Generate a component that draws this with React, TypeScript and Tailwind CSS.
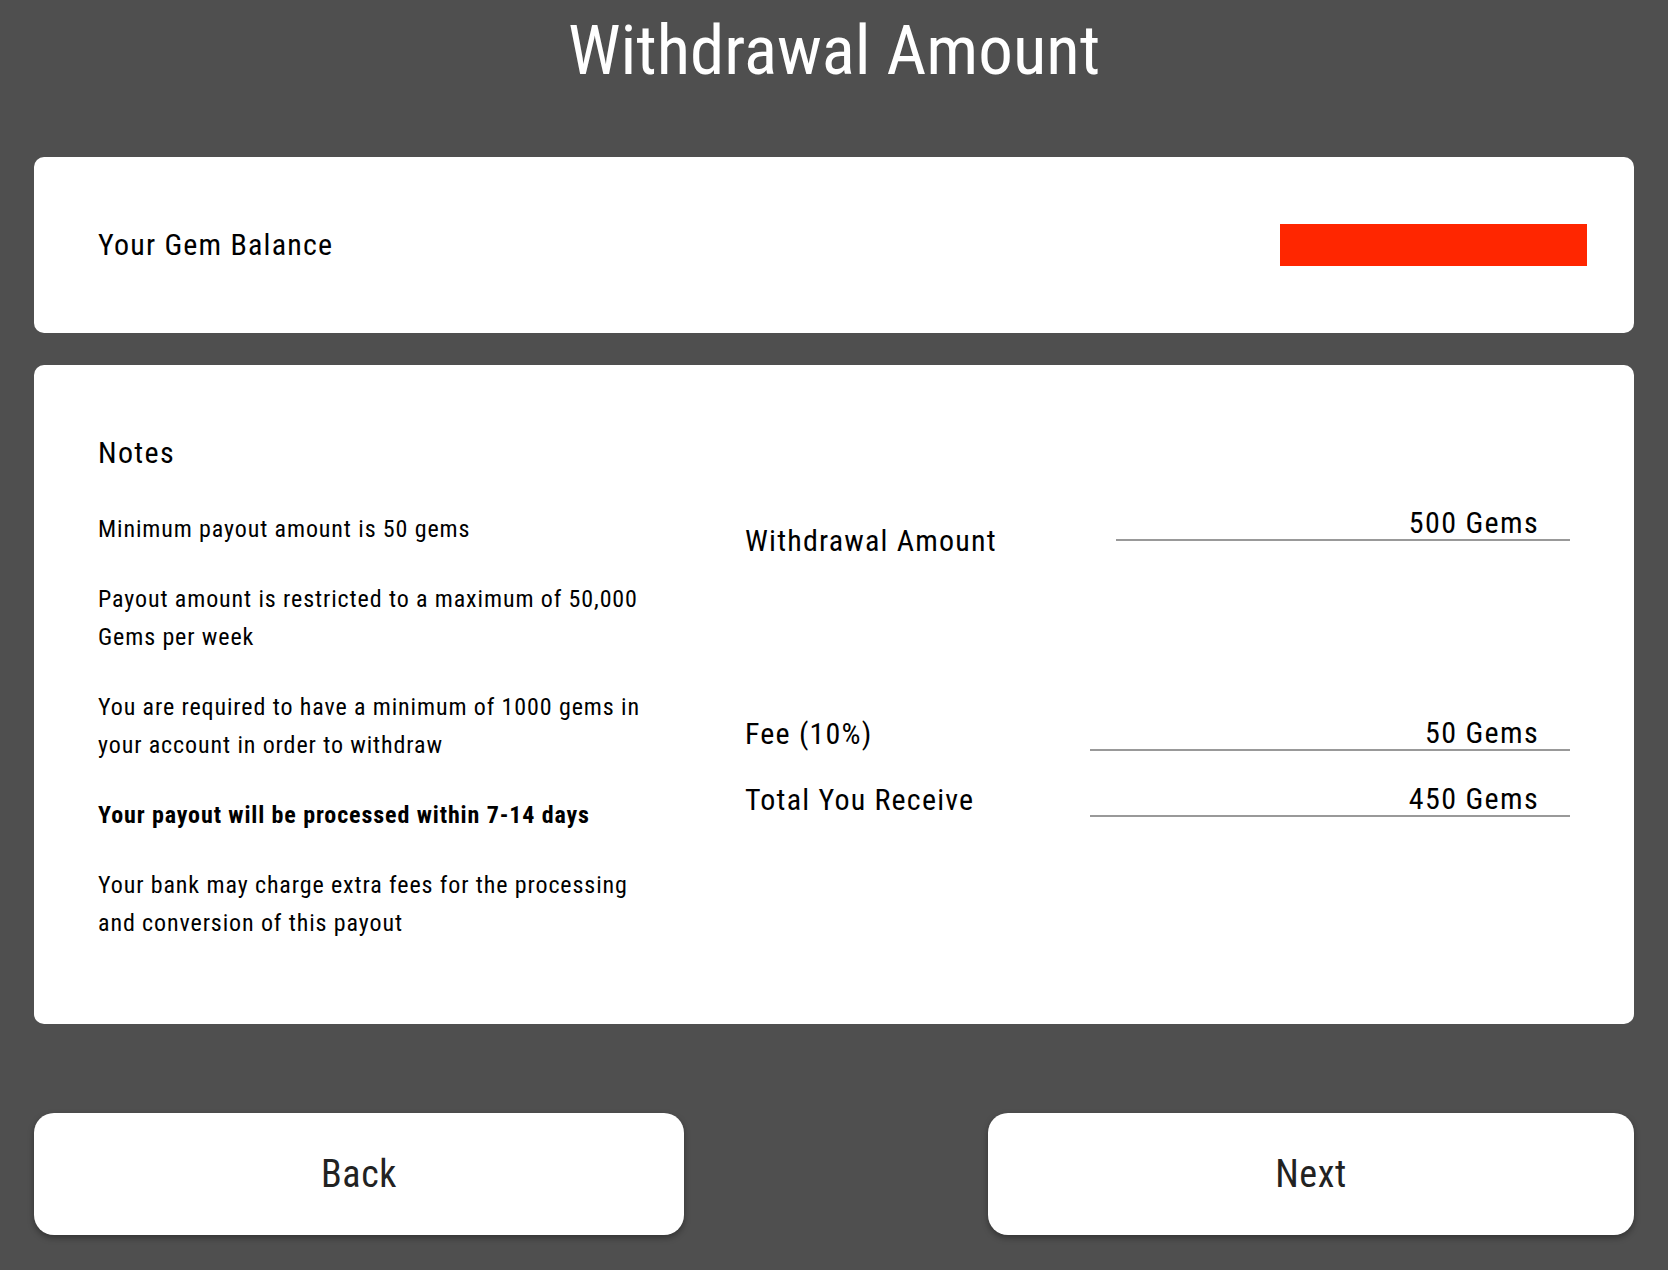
export default function App() {
  const notes = [
    { text: "Minimum payout amount is 50 gems" },
    { text: "Payout amount is restricted to a maximum of 50,000 Gems per week" },
    { text: "You are required to have a minimum of 1000 gems in your account in order to withdraw" },
    { text: "Your payout will be processed within 7-14 days", bold: true },
    { text: "Your bank may charge extra fees for the processing and conversion of this payout" },
  ];

  return (
    <div className="min-h-screen bg-[#4f4f4f] px-[34px] pt-[15px] pb-[35px] font-['Roboto_Condensed','Roboto',sans-serif] [font-stretch:condensed] text-black">
      <h1 className="text-center text-[69px] leading-[72px] text-white">Withdrawal Amount</h1>

      <div className="mt-[70px] flex h-[176px] items-center justify-between rounded-[10px] bg-white pl-16 pr-[47px]">
        <span className="text-[30px] leading-[40px] tracking-[0.04em]">Your Gem Balance</span>
        <div className="h-[42px] w-[307px] bg-[#ff2600]" />
      </div>

      <div className="mt-8 flex h-[659px] rounded-[10px] bg-white px-16 pt-[70px]">
        <div className="w-[647px] shrink-0">
          <h2 className="text-[30px] leading-[36px] tracking-[0.045em]">Notes</h2>
          <div className="mt-[39px] flex w-[555px] flex-col gap-8">
            {notes.map((n) => (
              <p
                key={n.text}
                className={
                  n.bold
                    ? "text-[24px] leading-[38px] font-bold tracking-[0.037em]"
                    : "text-[24px] leading-[38px] tracking-[0.037em]"
                }
              >
                {n.text}
              </p>
            ))}
          </div>
        </div>

        <div className="flex flex-1 flex-col pt-[72px]">
          <div className="flex h-[34px] items-start justify-between">
            <span className="mt-[14px] text-[30px] leading-[40px] tracking-[0.04em]">Withdrawal Amount</span>
            <div className="w-[454px] border-b-2 border-[#999] pr-[31px] text-right text-[30px] leading-[32px] tracking-[0.045em]">
              500 Gems
            </div>
          </div>
          <div className="mt-[176px] flex h-[34px] items-center justify-between">
            <span className="text-[30px] leading-[40px] tracking-[0.04em]">Fee (10%)</span>
            <div className="w-[480px] border-b-2 border-[#999] pr-[31px] text-right text-[30px] leading-[32px] tracking-[0.045em]">
              50 Gems
            </div>
          </div>
          <div className="mt-8 flex h-[34px] items-center justify-between">
            <span className="text-[30px] leading-[40px] tracking-[0.04em]">Total You Receive</span>
            <div className="w-[480px] border-b-2 border-[#999] pr-[31px] text-right text-[30px] leading-[32px] tracking-[0.045em]">
              450 Gems
            </div>
          </div>
        </div>
      </div>

      <div className="mt-[89px] flex justify-between">
        <button className="h-[122px] w-[650px] rounded-[20px] bg-white text-[38px] tracking-[0.015em] text-[#222] shadow-[0_3px_6px_rgba(0,0,0,0.35)]">
          Back
        </button>
        <button className="h-[122px] w-[646px] rounded-[20px] bg-white text-[38px] tracking-[0.015em] text-[#222] shadow-[0_3px_6px_rgba(0,0,0,0.35)]">
          Next
        </button>
      </div>
    </div>
  );
}
